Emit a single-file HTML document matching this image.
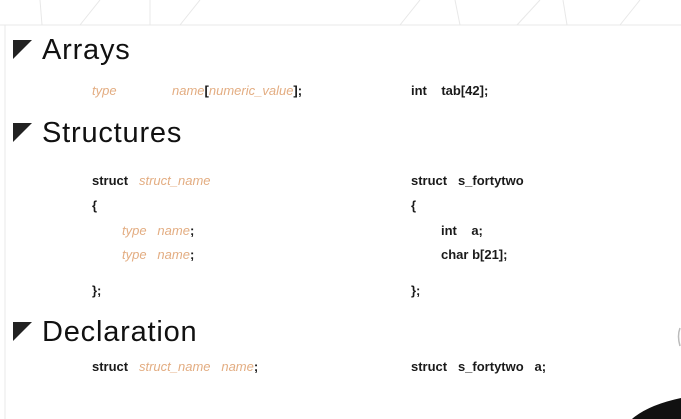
<!DOCTYPE html>
<html><head><style>
body{margin:0;width:681px;height:419px;overflow:hidden;background:#fff;position:relative;font-family:"Liberation Sans",sans-serif}
.t{position:absolute;white-space:pre;line-height:1}
.h{font-size:29px;color:#111;left:42px;letter-spacing:0.8px}
.c{font-size:13px;font-weight:bold;color:#1a1a1a}
.o{color:#e3ad82;font-style:italic;font-weight:normal}
.tri{position:absolute;left:13px;width:0;height:0;border-top:19px solid #222;border-right:19px solid transparent}
</style></head><body>
<svg style="position:absolute;left:0;top:0" width="681" height="419">
<g stroke="#e8e8e8" stroke-width="1" fill="none">
<line x1="0" y1="25" x2="681" y2="25"/>
<line x1="5" y1="25" x2="5" y2="419"/>
<line x1="40" y1="0" x2="42" y2="25"/>
<line x1="80" y1="25" x2="100" y2="0"/>
<line x1="150" y1="0" x2="150" y2="25"/>
<line x1="180" y1="25" x2="200" y2="0"/>
<line x1="400" y1="25" x2="420" y2="0"/>
<line x1="455" y1="0" x2="460" y2="25"/>
<line x1="517" y1="25" x2="540" y2="0"/>
<line x1="563" y1="0" x2="567" y2="25"/>
<line x1="620" y1="25" x2="640" y2="0"/>
</g>
<path d="M632 419 Q648 405 681 398 L681 419 Z" fill="#111"/>
<path d="M680 328 q-3 8 0 18" stroke="#bbb" stroke-width="1.5" fill="none"/>
</svg>
<div class="tri" style="top:40px"></div>
<div class="t h" style="top:36px">Arrays</div>
<div class="t c" style="left:92px;top:84px"><span class="o">type</span></div>
<div class="t c" style="left:172px;top:84px"><span class="o">name</span>[<span class="o">numeric_value</span>];</div>
<div class="t c" style="left:411px;top:84px">int    tab[42];</div>
<div class="tri" style="top:123px"></div>
<div class="t h" style="top:119px">Structures</div>
<div class="t c" style="left:92px;top:174px">struct   <span class="o">struct_name</span></div>
<div class="t c" style="left:92px;top:199px">{</div>
<div class="t c" style="left:122px;top:224px"><span class="o">type   name</span>;</div>
<div class="t c" style="left:122px;top:248px"><span class="o">type   name</span>;</div>
<div class="t c" style="left:92px;top:284px">};</div>
<div class="t c" style="left:411px;top:174px">struct   s_fortytwo</div>
<div class="t c" style="left:411px;top:199px">{</div>
<div class="t c" style="left:441px;top:224px">int    a;</div>
<div class="t c" style="left:441px;top:248px">char b[21];</div>
<div class="t c" style="left:411px;top:284px">};</div>
<div class="tri" style="top:322px"></div>
<div class="t h" style="top:318px">Declaration</div>
<div class="t c" style="left:92px;top:360px">struct   <span class="o">struct_name   name</span>;</div>
<div class="t c" style="left:411px;top:360px">struct   s_fortytwo   a;</div>
</body></html>
